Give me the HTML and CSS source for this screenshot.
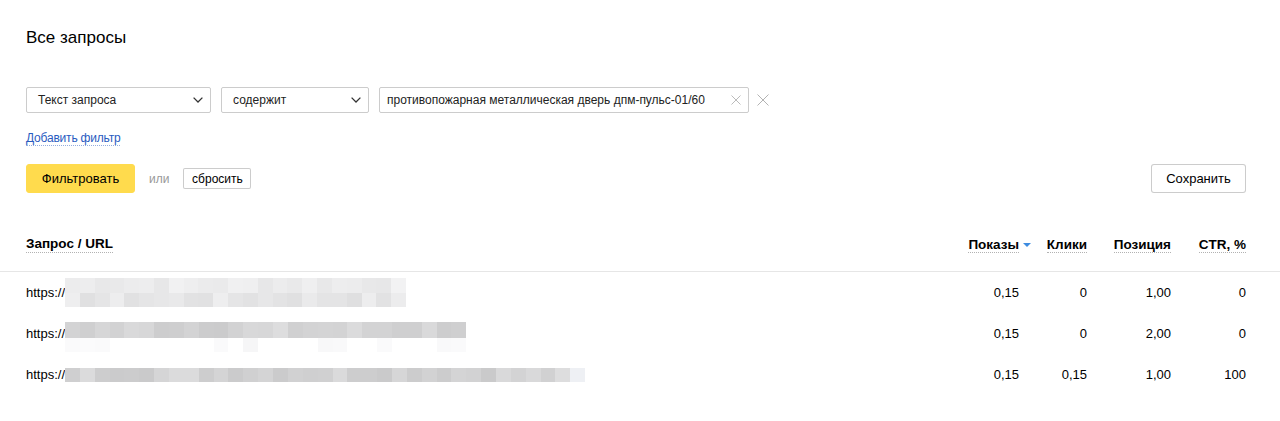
FILE: index.html
```html
<!DOCTYPE html>
<html lang="ru">

<head>
	<meta charset="UTF-8">
	<meta name="viewport" content="width=device-width, initial-scale=1.0">
	<title>Все запросы</title>
	<link rel="stylesheet" href="styles.css">
</head>

<body>
	<div class="page">
		<h1 class="title">Все запросы</h1>

		<div class="filter-row">
			<div class="select select-field">
				<span>Текст запроса</span>
				<svg class="chevron" width="10" height="6" viewBox="0 0 10 6"><path d="M0.6 0.6 L5 5 L9.4 0.6" /></svg>
			</div>
			<div class="select select-op">
				<span>содержит</span>
				<svg class="chevron" width="10" height="6" viewBox="0 0 10 6"><path d="M0.6 0.6 L5 5 L9.4 0.6" /></svg>
			</div>
			<div class="search">
				<span class="search-text">противопожарная металлическая дверь дпм-пульс-01/60</span>
				<svg class="clear" width="10" height="10" viewBox="0 0 10 10"><path d="M0.5 0.5 L9.5 9.5 M9.5 0.5 L0.5 9.5" /></svg>
			</div>
			<svg class="remove" width="12" height="12" viewBox="0 0 12 12"><path d="M0.5 0.5 L11.5 11.5 M11.5 0.5 L0.5 11.5" /></svg>
		</div>

		<a class="add-filter" href="#">Добавить фильтр</a>

		<div class="actions">
			<div class="actions-left">
				<button class="btn btn-action">Фильтровать</button>
				<span class="or">или</span>
				<button class="btn btn-small">сбросить</button>
			</div>
			<button class="btn btn-save">Сохранить</button>
		</div>
	</div>

	<div class="table">
		<div class="row head">
			<div class="cell cell-url"><span class="hint">Запрос / URL</span></div>
			<div class="cell num shows"><span class="hint">Показы</span><span class="sort"></span></div>
			<div class="cell num"><span class="hint">Клики</span></div>
			<div class="cell num"><span class="hint">Позиция</span></div>
			<div class="cell num"><span class="hint">CTR, %</span></div>
		</div>

		<div class="row">
			<div class="cell cell-url">https://<div class="blur blur-1" data-cols="23" data-lines="2" data-tone="light"></div></div>
			<div class="cell num shows">0,15</div>
			<div class="cell num">0</div>
			<div class="cell num">1,00</div>
			<div class="cell num">0</div>
		</div>
		<div class="row">
			<div class="cell cell-url">https://<div class="blur blur-2" data-cols="27" data-lines="1" data-tone="dark" data-ghost="1"></div></div>
			<div class="cell num shows">0,15</div>
			<div class="cell num">0</div>
			<div class="cell num">2,00</div>
			<div class="cell num">0</div>
		</div>
		<div class="row">
			<div class="cell cell-url">https://<div class="blur blur-3" data-cols="35" data-lines="1" data-tone="dark"></div></div>
			<div class="cell num shows">0,15</div>
			<div class="cell num">0,15</div>
			<div class="cell num">1,00</div>
			<div class="cell num">100</div>
		</div>
	</div>

	<script>
		// Pixelated placeholder for hidden URLs
		let seed = 7;
		function rand() {
			seed = (seed * 9301 + 49297) % 233280;
			return seed / 233280;
		}

		function grey(min, max) {
			const v = Math.round(min + rand() * (max - min));
			return `rgb(${v}, ${v}, ${v + 1})`;
		}

		document.querySelectorAll('.blur').forEach(blur => {
			const cols = +blur.dataset.cols;
			const lines = +blur.dataset.lines;
			const dark = blur.dataset.tone === 'dark';
			for (let l = 0; l < lines; l++) {
				const line = document.createElement('div');
				line.className = 'blur-line';
				for (let c = 0; c < cols; c++) {
					const cell = document.createElement('span');
					if (dark) {
						cell.style.background = c === cols - 1 && cols > 30 ? '#eef0f4' : grey(202, 222);
					} else {
						cell.style.background = l === 0 ? grey(230, 243) : grey(222, 238);
					}
					line.appendChild(cell);
				}
				blur.appendChild(line);
			}
			if (blur.dataset.ghost) {
				const line = document.createElement('div');
				line.className = 'blur-line ghost';
				for (let c = 0; c < cols; c++) {
					const cell = document.createElement('span');
					cell.style.background = rand() > 0.65 ? grey(246, 251) : 'transparent';
					line.appendChild(cell);
				}
				blur.appendChild(line);
			}
		});
	</script>
</body>

</html>
```

FILE: styles.css
```css
body {
	font-family: 'Liberation Sans', Arial, sans-serif;
	color: #000;
	background-color: #fff;
	margin: 0;
	font-size: 13px;
}

.page {
	padding: 28px 34px 0 26px;
}

.title {
	font-size: 17px;
	font-weight: normal;
	line-height: 20px;
	margin: 0 0 39px;
}

.filter-row {
	display: flex;
	align-items: center;
	gap: 10px;
	height: 26px;
}

.select,
.search {
	box-sizing: border-box;
	height: 26px;
	border: 1px solid rgba(0, 0, 0, 0.2);
	border-radius: 2px;
	display: flex;
	align-items: center;
	justify-content: space-between;
	font-size: 12px;
	color: #222;
}

.select {
	padding: 0 7px 0 11px;
}

.select-field {
	width: 185px;
}

.select-op {
	width: 148px;
}

.search {
	width: 370px;
	padding: 0 7px 0 7px;
}

.chevron path {
	fill: none;
	stroke: #333;
	stroke-width: 1.3;
}

.clear path {
	fill: none;
	stroke: #bbb;
	stroke-width: 1;
}

.remove {
	margin-left: -2px;
}

.remove path {
	fill: none;
	stroke: #b3b3b3;
	stroke-width: 1;
}

.add-filter {
	display: inline-block;
	margin-top: 18px;
	font-size: 12px;
	letter-spacing: -0.2px;
	color: #2a5bbf;
	text-decoration: none;
	border-bottom: 1px dotted rgba(42, 91, 191, 0.5);
	line-height: 14px;
}

.actions {
	display: flex;
	align-items: center;
	justify-content: space-between;
	margin-top: 18px;
}

.actions-left {
	display: flex;
	align-items: center;
}

.btn {
	font-family: inherit;
	font-size: 13px;
	color: #000;
	background: #fff;
	border: 1px solid rgba(0, 0, 0, 0.2);
	border-radius: 3px;
	cursor: pointer;
	box-sizing: border-box;
	height: 29px;
	padding: 0 14px;
}

.btn-action {
	width: 109px;
	background-color: #ffdb4d;
	border-color: #ffdb4d;
}

.or {
	color: #999;
	font-size: 12px;
	margin: 0 14px 0 14px;
}

.btn-small {
	height: 21px;
	width: 68px;
	padding: 0;
	font-size: 12px;
	border-radius: 2px;
}

.btn-save {
	width: 95px;
	padding: 0;
}

.table {
	margin-top: 43px;
}

.row {
	display: grid;
	grid-template-columns: 1fr 80px 56px 84px 75px;
	padding: 0 34px 0 26px;
	height: 41px;
	align-items: center;
}

.row.head {
	height: auto;
	align-items: end;
	padding-bottom: 18px;
	border-bottom: 1px solid #e6e6e6;
	font-weight: bold;
	font-size: 13.5px;
	line-height: 16px;
}

.cell {
	white-space: nowrap;
}

.cell-url {
	display: flex;
	align-items: center;
}

.num {
	text-align: right;
}

.row .shows {
	padding-right: 12px;
}

.row.head .shows {
	padding-right: 0;
}

.hint {
	border-bottom: 1px dotted rgba(0, 0, 0, 0.3);
}

.sort {
	display: inline-block;
	width: 0;
	height: 0;
	margin-left: 4px;
	vertical-align: middle;
	border-left: 4px solid transparent;
	border-right: 4px solid transparent;
	border-top: 4px solid #3d8be0;
}

.blur {
	display: flex;
	flex-direction: column;
}

.blur-line {
	display: flex;
}

.blur-line span {
	flex: 1;
}

.blur-1 {
	width: 341px;
}

.blur-1 .blur-line {
	height: 14.5px;
}

.blur-2 {
	width: 401px;
	margin-top: 7px;
}

.blur-2 .blur-line {
	height: 16px;
}

.blur-2 .ghost {
	height: 14px;
}

.blur-3 {
	width: 520px;
}

.blur-3 .blur-line {
	height: 14px;
}
```
